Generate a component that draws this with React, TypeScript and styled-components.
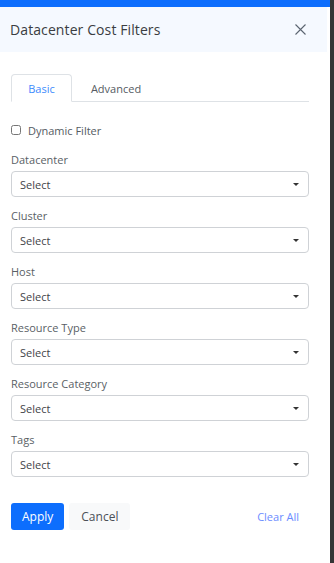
import { FC } from 'react';
import styled, { createGlobalStyle } from 'styled-components';

const fields = ['Datacenter', 'Cluster', 'Host', 'Resource Type', 'Resource Category', 'Tags'];

const App: FC = () => {
  return (
    <>
      <GlobalStyle />
      <Panel>
        <Header>
          <Title>Datacenter Cost Filters</Title>
          <CloseButton aria-label="Close">
            <svg width="11" height="11" viewBox="0 0 11 11">
              <path d="M0.5 0.5 L10.5 10.5 M10.5 0.5 L0.5 10.5" stroke="#5a6470" strokeWidth="1.1" />
            </svg>
          </CloseButton>
        </Header>

        <Body>
          <Tabs>
            <Tab active>Basic</Tab>
            <Tab>Advanced</Tab>
          </Tabs>

          <CheckRow>
            <Check type="checkbox" />
            <span>Dynamic Filter</span>
          </CheckRow>

          <Fields>
            {fields.map((f) => (
              <Field key={f}>
                <Label>{f}</Label>
                <SelectBox>
                  <span>Select</span>
                  <Caret />
                </SelectBox>
              </Field>
            ))}
          </Fields>

          <Footer>
            <Button primary>Apply</Button>
            <Button>Cancel</Button>
            <ClearLink>Clear All</ClearLink>
          </Footer>
        </Body>
      </Panel>
    </>
  );
};

export default App;

const GlobalStyle = createGlobalStyle`
  html, body {
    margin: 0;
    padding: 0;
    height: 100%;
    background: #353535;
  }
  #root {
    height: 100%;
  }
  * {
    box-sizing: border-box;
  }
`;

const Panel = styled.div`
  width: 330px;
  height: 100%;
  background: #ffffff;
  font-family: 'Open Sans', 'Liberation Sans', sans-serif;
  border-top: 7px solid #0d6efd;
`;

const Header = styled.div`
  height: 45px;
  background: #f5f9ff;
  margin-right: 3px;
  padding: 0 21px 0 10px;
  display: flex;
  align-items: center;
  justify-content: space-between;
`;

const Title = styled.h1`
  margin: 0;
  font-size: 14px;
  font-weight: 500;
  color: #3a3d42;
  letter-spacing: 0.1px;
`;

const CloseButton = styled.button`
  all: unset;
  display: flex;
  cursor: pointer;
`;

const Body = styled.div`
  padding: 22px 21px 0 11px;
`;

const Tabs = styled.div`
  display: flex;
  border-bottom: 1px solid #dee2e6;
`;

const Tab = styled.div<{ active?: boolean }>`
  width: ${(p) => (p.active ? '61px' : '88px')};
  height: 28px;
  margin-bottom: -1px;
  display: flex;
  align-items: center;
  justify-content: center;
  font-size: 11px;
  color: ${(p) => (p.active ? '#3d8bfd' : '#555b62')};
  border: 1px solid ${(p) => (p.active ? '#dee2e6' : 'transparent')};
  border-bottom-color: ${(p) => (p.active ? '#ffffff' : 'transparent')};
  border-radius: 4px 4px 0 0;
  background: ${(p) => (p.active ? '#ffffff' : 'transparent')};
`;

const CheckRow = styled.label`
  margin-top: 20px;
  height: 16px;
  display: flex;
  align-items: center;
  gap: 7px;
  font-size: 11px;
  color: #555b62;
`;

const Check = styled.input`
  margin: 0;
  width: 10px;
  height: 10px;
`;

const Fields = styled.div`
  margin-top: 14px;
  display: flex;
  flex-direction: column;
  gap: 11px;
`;

const Field = styled.div`
  display: flex;
  flex-direction: column;
`;

const Label = styled.div`
  font-size: 11px;
  line-height: 16px;
  margin-bottom: 3px;
  color: #5a5f66;
`;

const SelectBox = styled.div`
  height: 26px;
  border: 1px solid #cfd2d6;
  border-radius: 4px;
  padding: 0 9px 0 8px;
  display: flex;
  align-items: center;
  justify-content: space-between;
  font-size: 11px;
  color: #3f4348;
`;

const Caret = styled.span`
  width: 0;
  height: 0;
  border-left: 3px solid transparent;
  border-right: 3px solid transparent;
  border-top: 3px solid #333;
`;

const Footer = styled.div`
  margin-top: 26px;
  display: flex;
  align-items: center;
  gap: 5px;
`;

const Button = styled.button<{ primary?: boolean }>`
  all: unset;
  height: 27px;
  padding: 0 ${(p) => (p.primary ? '11px' : '12px')};
  border-radius: 3px;
  font-family: 'Open Sans', 'Liberation Sans', sans-serif;
  font-size: 12px;
  display: flex;
  align-items: center;
  cursor: pointer;
  background: ${(p) => (p.primary ? '#0d6efd' : '#f8f9fa')};
  color: ${(p) => (p.primary ? '#ffffff' : '#4b5057')};
`;

const ClearLink = styled.a`
  margin-left: auto;
  margin-right: 10px;
  font-size: 11px;
  color: #6b8cff;
  cursor: pointer;
`;
